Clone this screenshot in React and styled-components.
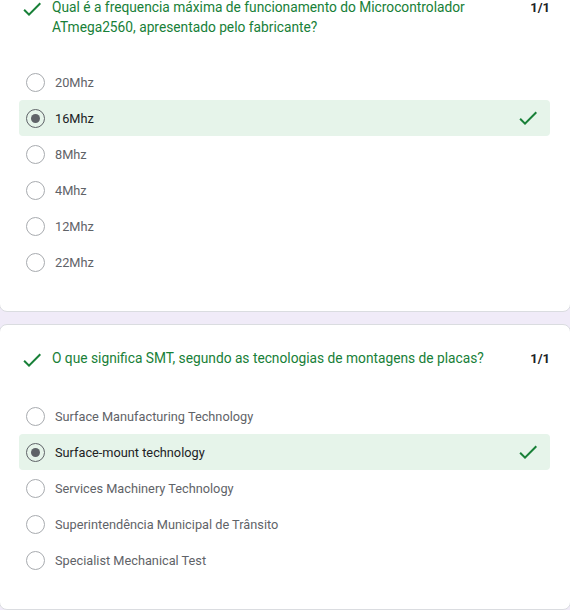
import React from "react";
import styled, { createGlobalStyle } from "styled-components";

const GlobalStyle = createGlobalStyle`
  body {
    margin: 0;
    background: #f0ebf8;
    font-family: Roboto, "Liberation Sans", Arial, sans-serif;
  }
`;

const Page = styled.div`
  display: flex;
  flex-direction: column;
  gap: 12px;
  margin-top: -27px;
`;

const Card = styled.div`
  background: #fff;
  border: 1px solid #dadce0;
  border-radius: 8px;
  margin: 0 -1px;
  padding: 23px 20px 31px 19px;
`;

const Header = styled.div`
  display: flex;
  align-items: flex-start;
  padding-left: 1px;
  margin-bottom: ${(p) => p.gap}px;
`;

const Title = styled.div`
  flex: 1;
  color: #188038;
  font-size: 13.75px;
  line-height: 20px;
  padding-left: 8px;
  padding-right: 24px;
`;

const Score = styled.div`
  color: #202124;
  font-size: 13px;
  font-weight: 700;
  line-height: 20px;
  padding-top: 1px;
`;

const Options = styled.div`
  display: flex;
  flex-direction: column;
`;

const Row = styled.div`
  display: flex;
  align-items: center;
  height: 36px;
  padding: 0 10px 0 7px;
  border-radius: 4px;
  background: ${(p) => (p.selected ? "#e6f4ea" : "transparent")};
`;

const Radio = styled.span`
  box-sizing: border-box;
  width: 19px;
  height: 19px;
  border-radius: 50%;
  border: 1.5px solid ${(p) => (p.checked ? "#5f6368" : "#a8abaf")};
  display: flex;
  align-items: center;
  justify-content: center;
  flex-shrink: 0;

  &::after {
    content: "";
    display: ${(p) => (p.checked ? "block" : "none")};
    width: 9px;
    height: 9px;
    border-radius: 50%;
    background: #5f6368;
  }
`;

const Label = styled.span`
  flex: 1;
  margin-left: 10px;
  font-size: 12.75px;
  color: ${(p) => (p.selected ? "#202124" : "#5f6368")};
`;

const Check = ({ size = 24 }) => (
  <svg width={size} height={size} viewBox="0 0 24 24" fill="#188038">
    <path d="M9 16.17L4.83 12l-1.42 1.41L9 19 21 7l-1.41-1.41z" />
  </svg>
);

const questions = [
  {
    title:
      "Qual é a frequencia máxima de funcionamento do Microcontrolador ATmega2560, apresentado pelo fabricante?",
    gap: 27,
    options: ["20Mhz", "16Mhz", "8Mhz", "4Mhz", "12Mhz", "22Mhz"],
    answer: 1,
  },
  {
    title: "O que significa SMT, segundo as tecnologias de montagens de placas?",
    gap: 26,
    options: [
      "Surface Manufacturing Technology",
      "Surface-mount technology",
      "Services Machinery Technology",
      "Superintendência Municipal de Trânsito",
      "Specialist Mechanical Test",
    ],
    answer: 1,
  },
];

function App() {
  return (
    <Page>
      <GlobalStyle />
      {questions.map((q) => (
        <Card key={q.title}>
          <Header gap={q.gap}>
            <Check />
            <Title>{q.title}</Title>
            <Score>1/1</Score>
          </Header>
          <Options>
            {q.options.map((opt, i) => (
              <Row key={opt} selected={i === q.answer}>
                <Radio checked={i === q.answer} />
                <Label selected={i === q.answer}>{opt}</Label>
                {i === q.answer && <Check />}
              </Row>
            ))}
          </Options>
        </Card>
      ))}
    </Page>
  );
}

export default App;
